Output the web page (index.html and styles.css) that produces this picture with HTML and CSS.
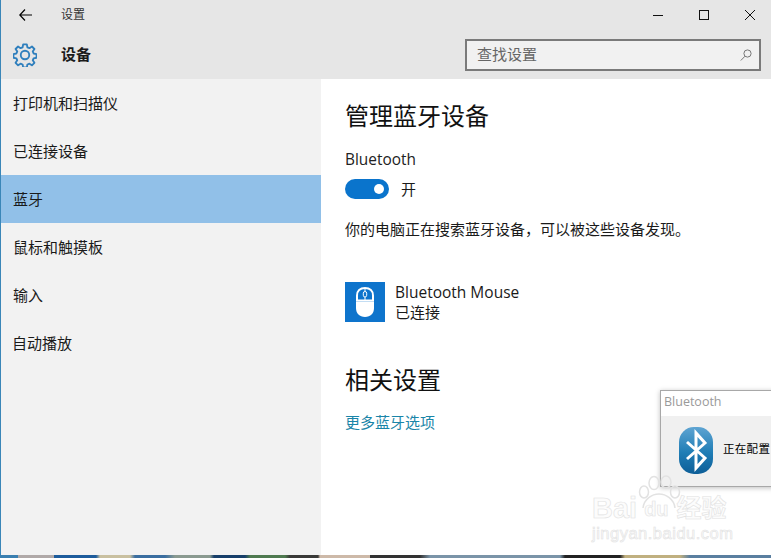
FILE: index.html
```html
<!DOCTYPE html>
<html lang="zh">
<head>
<meta charset="utf-8">
<title>设置</title>
<link rel="stylesheet" href="styles.css">
</head>
<body>
<div class="window">
  <header class="header">
    <div class="titlebar">
      <svg class="back" width="13" height="12" viewBox="0 0 13 12"><path d="M6 .5.8 6 6 11.500M.8 6H13" fill="none" stroke="#000" stroke-width="1.200"/></svg>
      <span class="title">设置</span>
      <div class="controls">
        <svg width="12" height="12" viewBox="0 0 12 12"><path d="M1 6.500H11" stroke="#111" stroke-width="1"/></svg>
        <svg width="12" height="12" viewBox="0 0 12 12"><rect x="1.500" y="1.500" width="9" height="9" fill="none" stroke="#111" stroke-width="1"/></svg>
        <svg width="12" height="12" viewBox="0 0 12 12"><path d="M1 1 11 11M11 1 1 11" stroke="#111" stroke-width="1"/></svg>
      </div>
    </div>
    <div class="subbar">
      <svg class="gear" width="24" height="24" viewBox="0 0 26 26"><path d="M11 1.500h4l.6 3.200 2.200.9 2.700-1.800 2.700 2.700-1.800 2.700.9 2.200 3.200.6v4l-3.200.6-.9 2.200 1.800 2.700-2.700 2.700-2.700-1.800-2.200.9-.6 3.200h-4l-.6-3.200-2.200-.9-2.700 1.800-2.700-2.700 1.800-2.700-.9-2.200-3.200-.6v-4l3.200-.6.9-2.200-1.800-2.700 2.700-2.700 2.700 1.800 2.200-.9z" fill="none" stroke="#2f7fbd" stroke-width="2" stroke-linejoin="round"/><circle cx="13" cy="13" r="4.600" fill="none" stroke="#2f7fbd" stroke-width="2"/></svg>
      <span class="section">设备</span>
      <div class="search">
        <span class="search-text">查找设置</span>
        <svg width="12" height="12" viewBox="0 0 12 12"><circle cx="7.500" cy="4.500" r="3.600" fill="none" stroke="#777" stroke-width="1"/><path d="M5 7.200.8 11.500" stroke="#777" stroke-width="1"/></svg>
      </div>
    </div>
  </header>
  <div class="body">
    <nav class="sidebar">
      <div class="nav-item">打印机和扫描仪</div>
      <div class="nav-item">已连接设备</div>
      <div class="nav-item selected">蓝牙</div>
      <div class="nav-item">鼠标和触摸板</div>
      <div class="nav-item">输入</div>
      <div class="nav-item nudge">自动播放</div>
    </nav>
    <main class="content">
      <h1 class="heading">管理蓝牙设备</h1>
      <div class="label">Bluetooth</div>
      <div class="toggle-row">
        <span class="toggle"><span class="knob"></span></span>
        <span class="toggle-text">开</span>
      </div>
      <p class="desc">你的电脑正在搜索蓝牙设备，可以被这些设备发现。</p>
      <div class="device">
        <span class="device-icon">
          <svg width="18" height="30" viewBox="0 0 18 30"><path d="M9 1C4 1 1 4 1 8.500v5h16v-5C17 4 14 1 9 1Z" fill="none" stroke="#fff" stroke-width="2"/><path d="M0 14.500h18V21c0 5.500-3.500 9-9 9s-9-3.500-9-9Z" fill="#fff"/><rect x="7.300" y="4.500" width="3.400" height="5.500" rx="1.700" fill="none" stroke="#fff" stroke-width="1"/><path d="M9 1v3.500M9 10v3.500" stroke="#fff" stroke-width="1"/></svg>
        </span>
        <div class="device-text">
          <div>Bluetooth Mouse</div>
          <div class="device-status">已连接</div>
        </div>
      </div>
      <h2 class="heading related">相关设置</h2>
      <a class="link" href="#">更多蓝牙选项</a>
    </main>
  </div>
  <div class="dialog">
    <div class="dialog-title">Bluetooth</div>
    <div class="dialog-body">
      <svg width="34" height="47" viewBox="0 0 34 47"><defs><linearGradient id="bt" x1="0" y1="0" x2="0" y2="1"><stop offset="0" stop-color="#5ea4d2"/><stop offset=".55" stop-color="#1f7db5"/><stop offset="1" stop-color="#0d5e98"/></linearGradient></defs><rect width="34" height="47" rx="15" fill="url(#bt)"/><path d="M8 15 26 31 17 41V6l9 10L8 32" fill="none" stroke="#fff" stroke-width="3"/></svg>
      <span class="dialog-text">正在配置</span>
    </div>
  </div>
  <div class="watermark">
    <svg class="wm-paw" width="44" height="34" viewBox="0 0 44 34"><g fill="none" stroke="#e2e2e2" stroke-width="1.500"><ellipse cx="7" cy="17" rx="4.500" ry="6"/><ellipse cx="17" cy="8" rx="5" ry="6.500"/><ellipse cx="29" cy="7" rx="5" ry="6"/><ellipse cx="38" cy="17" rx="4.500" ry="6"/><path d="M6 33C7 24 15 19 22 19s15 5 16 14"/></g></svg>
    <div class="wm-logo">Bai<span class="wm-du">du</span><span class="wm-cn">经验</span></div>
    <div class="wm-url">jingyan.baidu.com</div>
  </div>
</div>
<div class="wallpaper"></div>
</body>
</html>
```

FILE: styles.css
```css
* { box-sizing: border-box; }
html, body { margin: 0; height: 100%; }
body {
  width: 771px;
  height: 558px;
  overflow: hidden;
  display: flex;
  flex-direction: column;
  background: #3a86b8;
  font-family: "Noto Sans CJK SC", "Open Sans", sans-serif;
  font-size: 15px;
  color: #1a1a1a;
}
.window {
  position: relative;
  flex: 1;
  min-height: 0;
  margin-left: 1px;
  background: #fff;
  display: flex;
  flex-direction: column;
  overflow: hidden;
}
.header { height: 79px; background: #e6e6e6; flex: none; }
.titlebar { height: 30px; display: flex; align-items: center; padding-left: 18px; }
.back { flex: none; margin-top: -1px; }
.title { margin-left: 29px; margin-top: -3px; font-size: 12px; color: #333; }
.controls { margin-left: auto; display: flex; gap: 34px; padding-right: 15px; }
.subbar { height: 49px; display: flex; align-items: flex-start; padding-left: 12px; }
.gear { flex: none; margin-top: 13px; }
.section { margin-left: 24px; font-size: 15px; font-weight: 700; line-height: 20px; margin-top: 14px; }
.search {
  margin-left: auto;
  margin-right: 10px;
  margin-top: 9px;
  width: 296px;
  height: 32px;
  border: 2px solid #7a7a7a;
  background: #f1f1f1;
  display: flex;
  align-items: center;
  justify-content: space-between;
  padding: 0 7px 0 10px;
  color: #666;
}
.search-text { font-size: 15px; line-height: 20px; margin-top: -3px; }
.body { flex: 1; min-height: 0; display: flex; }
.sidebar { width: 320px; flex: none; background: #f2f2f2; }
.nav-item {
  height: 48px;
  display: flex;
  align-items: center;
  padding: 0 0 1px 12px;
}
.nav-item.nudge { padding-left: 11px; }
.nav-item.selected { background: #91c0e8; }
.content { flex: 1; padding: 19px 0 0 24px; }
.heading { margin: 0; font-size: 24px; font-weight: 400; line-height: 34px; color: #111; }
.label { margin-top: 18px; font-size: 15.400px; line-height: 20px; font-family: "Open Sans", sans-serif; color: #222; }
.toggle-row { margin-top: 9px; height: 20px; display: flex; align-items: center; gap: 12px; }
.toggle-text { margin-top: -2px; }
.toggle {
  width: 44px;
  height: 20px;
  border-radius: 10px;
  background: #0a74cc;
  display: flex;
  align-items: center;
  justify-content: flex-end;
  padding-right: 5px;
}
.knob { width: 10px; height: 10px; border-radius: 50%; background: #fff; }
.desc { margin: 20px 0 0; line-height: 20px; }
.device { margin-top: 43px; display: flex; gap: 10px; align-items: center; }
.device-icon {
  width: 40px;
  height: 40px;
  background: #0e74cc;
  display: flex;
  align-items: center;
  justify-content: center;
  flex: none;
}
.device-text { font-size: 15.500px; line-height: 20px; font-family: "Open Sans", "Noto Sans CJK SC", sans-serif; }
.device-status { font-size: 15px; }
.related { margin-top: 40px; }
.link { display: block; margin-top: 16px; line-height: 20px; color: #1a85a8; text-decoration: none; }
.dialog {
  position: absolute;
  left: 659px;
  top: 390px;
  width: 160px;
  height: 97px;
  background: #f0f0f0;
  border: 1px solid #a8a8a8;
  box-shadow: 0 1px 5px rgba(0, 0, 0, 0.25);
}
.dialog-title {
  height: 25px;
  background: #fff;
  padding-left: 3px;
  font-size: 12.500px;
  line-height: 22px;
  color: #9a9a9a;
  font-family: "Open Sans", sans-serif;
}
.dialog-body { display: flex; align-items: flex-start; padding: 11px 0 0 18px; }
.dialog-text { margin-left: 10px; margin-top: 13px; font-size: 11.500px; line-height: 17px; color: #000; letter-spacing: 0.300px; }
.watermark {
  position: absolute;
  left: 591px;
  top: 494px;
  width: 150px;
  font-family: "Liberation Sans", "Noto Sans CJK SC", sans-serif;
  color: #fcfcfc;
  -webkit-text-stroke: 0.6px #e2e2e2;
}
.wm-paw { position: absolute; left: 45px; top: -19px; }
.wm-logo { height: 28px; font-size: 29px; line-height: 28px; font-weight: 700; white-space: nowrap; display: flex; align-items: center; }
.wm-du { font-size: 20px; margin-left: 7px; margin-top: 2px; }
.wm-cn { font-size: 25px; margin-left: 8px; }
.wm-url { font-size: 16.500px; line-height: 18px; margin-top: 2px; white-space: nowrap; letter-spacing: 0.500px; }
.wallpaper {
  flex: none;
  height: 3px;
  background: linear-gradient(90deg, #3a7fb0 0 18px, #b0a9a8 18px 54px, #1d5c9c 54px 96px, #c9c0a0 100px 130px, #3a6ea0 135px 165px, #8a9a90 175px 210px, #173f6a 214px 245px, #4f7a50 250px 285px, #3a3a38 290px 318px, #cdb9a8 320px 370px, #333 370px 420px, #7a94a8 430px 560px, #222 565px 620px, #c0b080 625px 680px, #5a7fa0 690px 771px);
}
```
